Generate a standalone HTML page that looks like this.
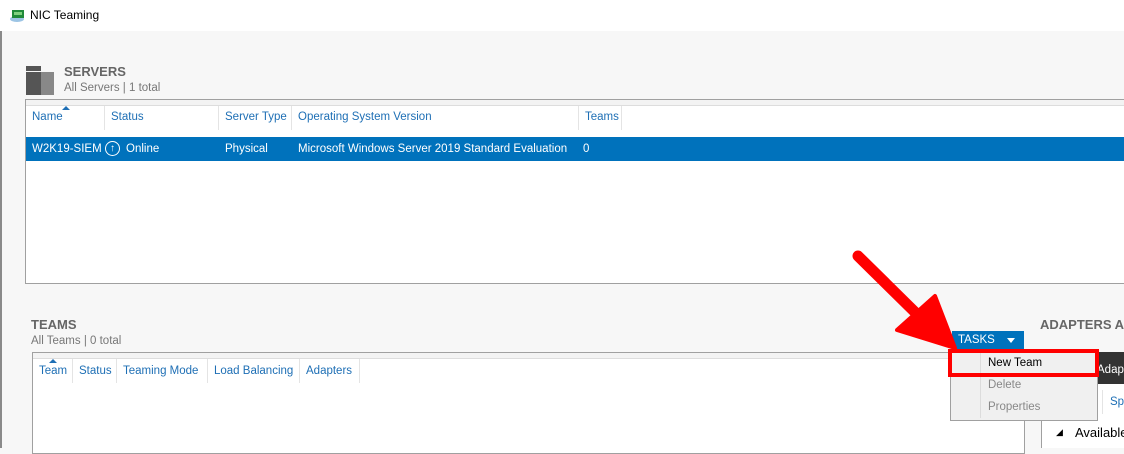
<!DOCTYPE html>
<html><head><style>
body{margin:0;width:1124px;height:448px;overflow:hidden;background:#f7f7f7;font-family:"Liberation Sans",sans-serif;font-size:11.5px;line-height:17px;position:relative}
.a{position:absolute;white-space:nowrap}
.hdr{color:#1e6fb5}
.sep{position:absolute;width:1px;background:#e4e4e4}
</style></head><body>
<div class="a" style="left:0;top:0;width:1124px;height:31px;background:#fff"></div>
<div class="a" style="left:0;top:31px;width:2px;height:417px;background:#8a8a8a"></div>
<svg class="a" style="left:9px;top:8px" width="17" height="16"><ellipse cx="8" cy="11" rx="7" ry="3" fill="#9cc4e4"/><rect x="3" y="2" width="12" height="8" fill="#1f8a3a"/><rect x="5" y="4" width="8" height="3" fill="#7fd07f"/></svg>
<div class="a" style="left:30px;top:7px;font-size:12px;color:#000">NIC Teaming</div>
<div class="a" style="left:26px;top:66px;width:15px;height:29px;background:#555"></div>
<div class="a" style="left:41px;top:72px;width:13px;height:23px;background:#888"></div>
<div class="a" style="left:26px;top:71px;width:15px;height:1px;background:#f7f7f7"></div>
<div class="a" style="left:64px;top:63px;font-size:13px;font-weight:bold;color:#666">SERVERS</div>
<div class="a" style="left:64px;top:80px;color:#777">All Servers | 1 total</div>
<div class="a" style="left:25px;top:99px;width:1100px;height:183px;border:1px solid #a0a0a0;border-right:none;background:#fff"></div>
<div class="a" style="left:26px;top:100px;width:1098px;height:5px;background:#f3f3f3;border-bottom:1px solid #ddd"></div>
<div class="a" style="left:62px;top:106px;width:0;height:0;border:4px solid transparent;border-bottom:4px solid #1e6fb5;border-top:none"></div>
<div class="a hdr" style="left:32px;top:109px">Name</div>
<div class="sep" style="left:104px;top:106px;height:24px"></div>
<div class="a hdr" style="left:111px;top:109px">Status</div>
<div class="sep" style="left:218px;top:106px;height:24px"></div>
<div class="a hdr" style="left:225px;top:109px">Server Type</div>
<div class="sep" style="left:291px;top:106px;height:24px"></div>
<div class="a hdr" style="left:298px;top:109px">Operating System Version</div>
<div class="sep" style="left:578px;top:106px;height:24px"></div>
<div class="a hdr" style="left:585px;top:109px">Teams</div>
<div class="sep" style="left:621px;top:106px;height:24px"></div>
<div class="a" style="left:26px;top:137px;width:1098px;height:24px;background:#0072bc"></div>
<div class="a" style="left:32px;top:141px;color:#fff">W2K19-SIEM</div>
<div class="a" style="left:105px;top:141px;width:13px;height:13px;border:1.5px solid #fff;border-radius:50%;color:#fff;font-size:10px;line-height:13px;text-align:center;font-weight:bold">↑</div>
<div class="a" style="left:126px;top:141px;color:#fff">Online</div>
<div class="a" style="left:225px;top:141px;color:#fff">Physical</div>
<div class="a" style="left:298px;top:141px;color:#fff">Microsoft Windows Server 2019 Standard Evaluation</div>
<div class="a" style="left:583px;top:141px;color:#fff">0</div>
<div class="a" style="left:31px;top:316px;font-size:13px;font-weight:bold;color:#666">TEAMS</div>
<div class="a" style="left:31px;top:333px;color:#777">All Teams | 0 total</div>
<div class="a" style="left:32px;top:352px;width:991px;height:100px;border:1px solid #a0a0a0;background:#fff"></div>
<div class="a" style="left:33px;top:353px;width:991px;height:5px;background:#f3f3f3;border-bottom:1px solid #ddd"></div>
<div class="a" style="left:49px;top:359px;width:0;height:0;border:4px solid transparent;border-bottom:4px solid #1e6fb5;border-top:none"></div>
<div class="a hdr" style="left:39px;top:363px">Team</div>
<div class="sep" style="left:72px;top:359px;height:24px"></div>
<div class="a hdr" style="left:79px;top:363px">Status</div>
<div class="sep" style="left:116px;top:359px;height:24px"></div>
<div class="a hdr" style="left:123px;top:363px">Teaming Mode</div>
<div class="sep" style="left:207px;top:359px;height:24px"></div>
<div class="a hdr" style="left:214px;top:363px">Load Balancing</div>
<div class="sep" style="left:299px;top:359px;height:24px"></div>
<div class="a hdr" style="left:306px;top:363px">Adapters</div>
<div class="sep" style="left:359px;top:359px;height:24px"></div>
<div class="a" style="left:1041px;top:352px;width:83px;height:96px;background:#fff;border-left:1px solid #a0a0a0"></div>
<div class="a" style="left:1040px;top:316px;font-size:13px;font-weight:bold;color:#666">ADAPTERS A</div>
<div class="a" style="left:1097px;top:352px;width:27px;height:32px;background:#333"></div>
<div class="a" style="left:1097px;top:362px;color:#fff">Adap</div>
<div class="sep" style="left:1102px;top:390px;height:24px"></div>
<div class="a hdr" style="left:1110px;top:394px">Sp</div>
<div class="a" style="left:1056px;top:424px;font-size:9px">◢</div>
<div class="a" style="left:1075px;top:424px;font-size:13px">Available</div>
<div class="a" style="left:952px;top:331px;width:72px;height:18px;background:#0072bc"></div>
<div class="a" style="left:958px;top:332px;color:#fff">TASKS</div>
<div class="a" style="left:1007px;top:338px;width:0;height:0;border:4px solid transparent;border-top:5px solid #fff;border-bottom:none"></div>
<div class="a" style="left:950px;top:349px;width:146px;height:70px;background:#f0f0f0;border:1px solid #a0a0a0"></div>
<div class="a" style="left:980px;top:352px;width:1px;height:66px;background:#dcdcdc"></div>
<div class="a" style="left:988px;top:355px;color:#000">New Team</div>
<div class="a" style="left:988px;top:377px;color:#888">Delete</div>
<div class="a" style="left:988px;top:399px;color:#888">Properties</div>
<div class="a" style="left:948px;top:349px;width:143px;height:20px;border:4px solid #f00"></div>
<svg class="a" style="left:0;top:0" width="1124" height="448"><line x1="858" y1="256" x2="925" y2="322" stroke="#f00" stroke-width="11" stroke-linecap="round"/><polygon points="955,348 897,330 935,296" fill="#f00" stroke="#f00" stroke-width="4" stroke-linejoin="round"/></svg>
</body></html>
